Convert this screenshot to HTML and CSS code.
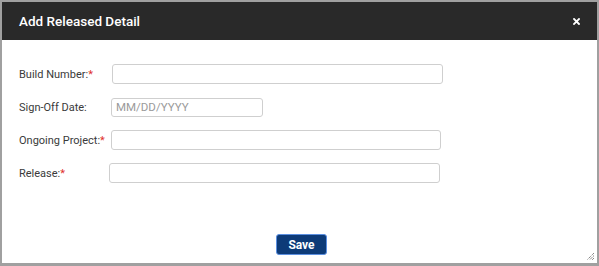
FILE: index.html
```html
<!DOCTYPE html>
<html lang="en">

<head>
    <meta charset="UTF-8">
    <meta name="viewport" content="width=device-width, initial-scale=1.0">
    <title>Add Released Detail</title>
    <link rel="stylesheet" href="styles.css">
</head>

<body>
    <div class="dialog">
        <div class="dialog-header">
            <span class="dialog-title">Add Released Detail</span>
            <span class="close" title="Close">
                <svg width="7" height="7" viewBox="0 0 7 7">
                    <path d="M1 1 L6 6 M6 1 L1 6" stroke="#fff" stroke-width="1.8" stroke-linecap="square" />
                </svg>
            </span>
        </div>

        <div class="dialog-body">
            <div class="form-row">
                <label class="field-label">Build Number:<span class="req">*</span></label>
                <input class="field field-build" type="text">
            </div>
            <div class="form-row">
                <label class="field-label">Sign-Off Date:</label>
                <input class="field field-date" type="text" placeholder="MM/DD/YYYY">
            </div>
            <div class="form-row">
                <label class="field-label">Ongoing Project:<span class="req">*</span></label>
                <input class="field field-project" type="text">
            </div>
            <div class="form-row">
                <label class="field-label">Release:<span class="req">*</span></label>
                <input class="field field-release" type="text">
            </div>
        </div>

        <div class="dialog-footer">
            <button class="btn-save">Save</button>
        </div>

        <!-- resize grip -->
        <svg class="grip" width="9" height="9" viewBox="0 0 9 9">
            <path d="M8 1 L1 8 M8 3.5 L3.5 8 M8 6 L6 8" stroke="#555" stroke-width="1" stroke-dasharray="1 1" />
        </svg>
    </div>
</body>

</html>
```

FILE: styles.css
```css
body {
    margin: 0;
    padding: 0;
    background-color: #ffffff;
    font-family: Roboto, 'Liberation Sans', Arial, sans-serif;
}

.dialog {
    position: relative;
    box-sizing: border-box;
    width: 599px;
    height: 266px;
    border: 2px solid #a0a0a0;
    border-bottom-width: 3px;
    background-color: #ffffff;
    display: flex;
    flex-direction: column;
}

.dialog-header {
    height: 38px;
    background-color: #292929;
    display: flex;
    align-items: center;
    justify-content: space-between;
    padding: 0 17px 0 17px;
}

.dialog-title {
    color: #ffffff;
    font-size: 13.5px;
    font-weight: 500;
    margin-top: -1px;
}

.close {
    display: flex;
    cursor: pointer;
}

.dialog-body {
    padding: 24px 0 0 17px;
    display: flex;
    flex-direction: column;
    gap: 13px;
}

.form-row {
    display: flex;
    align-items: center;
    height: 20px;
}

.field-label {
    flex: 0 0 93px;
    white-space: nowrap;
    font-size: 11px;
    color: #3a3a3a;
}

.req {
    color: #e0302c;
}

.field {
    flex: 0 0 auto;
    box-sizing: border-box;
    height: 20px;
    border: 1px solid #cfcfcf;
    border-radius: 3px;
    padding: 0 4px;
    font-family: inherit;
    font-size: 11.5px;
    color: #333333;
    outline: none;
}

.field::placeholder {
    color: #9a9a9a;
}

.field-build {
    width: 331px;
}

.field-date {
    width: 152px;
    margin-left: -1px;
    height: 19px;
}

.field-project {
    width: 330px;
    margin-left: -1px;
}

.field-release {
    width: 331px;
    margin-left: -3px;
}

.dialog-footer {
    margin-top: auto;
    display: flex;
    justify-content: center;
    padding: 0 0 8px 4px;
}

.btn-save {
    width: 51px;
    height: 21px;
    background-color: #0d3b78;
    color: #ffffff;
    border: 1px solid #5b8fe0;
    border-radius: 3px;
    font-family: inherit;
    font-size: 12px;
    font-weight: bold;
    cursor: pointer;
}

.grip {
    position: absolute;
    right: 2px;
    bottom: 2px;
}
```
